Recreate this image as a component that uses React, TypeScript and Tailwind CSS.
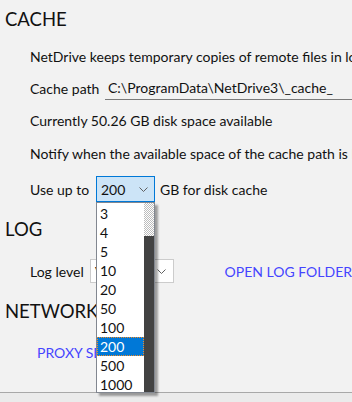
import { useState } from 'react'

const font = { fontFamily: 'Lato, "Noto Sans", sans-serif' }

function Chevron() {
  return (
    <svg width="9" height="5" viewBox="0 0 9 5" className="shrink-0">
      <polyline points="0.5,0.5 4.5,4.5 8.5,0.5" fill="none" stroke="#606060" strokeWidth="1" />
    </svg>
  )
}

const sizes = ['3', '4', '5', '10', '20', '50', '100', '200', '500', '1000']

export default function App() {
  const [size] = useState('200')

  return (
    <div className="relative w-[352px] h-[402px] overflow-hidden bg-[#f2f2f2] text-[#111] text-[14px]" style={font}>
      <div className="flex flex-col h-[392px]">
        <div className="h-[40px] flex items-center pl-[5px] text-[18.5px]">CACHE</div>
        <div className="h-[32px] flex items-center pl-[30px] whitespace-nowrap">
          NetDrive keeps temporary copies of remote files in local disk
        </div>
        <div className="h-[32px] flex items-center pl-[30px] whitespace-nowrap">
          <span className="w-[75px] shrink-0">Cache path</span>
          <div className="flex-1 h-[24px] flex items-center pl-[3px] border-b border-[#7a7a7a]">
            C:\ProgramData\NetDrive3\_cache_
          </div>
        </div>
        <div className="h-[32px] flex items-center pl-[30px] whitespace-nowrap">
          Currently 50.26 GB disk space available
        </div>
        <div className="h-[34px] flex items-center pl-[30px] whitespace-nowrap">
          Notify when the available space of the cache path is less than
        </div>
        <div className="h-[38px] flex items-center pl-[30px] whitespace-nowrap">
          <span className="w-[66px] shrink-0">Use up to</span>
          <div className="w-[59px] h-[26px] flex items-center justify-between pl-[4px] pr-[6px] border border-[#0078d7] bg-[#cce4f7]">
            <span>{size}</span>
            <Chevron />
          </div>
          <span className="ml-[5px]">GB for disk cache</span>
        </div>
        <div className="h-[44px] flex items-center pl-[5px] text-[18.5px]">LOG</div>
        <div className="h-[38px] flex items-center pl-[30px] whitespace-nowrap">
          <span className="w-[60px] shrink-0">Log level</span>
          <div className="w-[89px] h-[24px] flex items-center justify-between pl-[4px] pr-[7px] border border-[#cccccc] bg-white">
            <span>Verbose</span>
            <Chevron />
          </div>
          <span className="ml-[51px] text-[#4545ff]">OPEN LOG FOLDER</span>
        </div>
        <div className="h-[44px] flex items-center pl-[5px] text-[18.5px]">NETWORK</div>
        <div className="h-[36px] flex items-center pl-[37px] text-[#4545ff] whitespace-nowrap">PROXY SETTINGS</div>
      </div>
      <div className="h-[10px] border-t border-[#a8a8a8] bg-[#ebebeb]" />

      {/* open dropdown list */}
      <div className="absolute left-[96px] top-[202px] w-[59px] h-[191px] flex border border-[#828790] bg-white shadow-[3px_3px_2px_rgba(0,0,0,0.35)]">
        <div className="flex-1 flex flex-col pt-[1px]">
          {sizes.map((s) => (
            <div
              key={s}
              className={
                s === size
                  ? 'h-[19px] flex items-center pl-[3px] bg-[#0078d7] text-white outline-1 outline-dotted outline-[#f08a24] -outline-offset-1'
                  : 'h-[19px] flex items-center pl-[3px]'
              }
            >
              {s}
            </div>
          ))}
        </div>
        <div className="w-[10px] flex flex-col">
          <div className="h-[33px] bg-[repeating-conic-gradient(#bdbdbd_0_25%,#ffffff_0_50%)] bg-[length:2px_2px]" />
          <div className="flex-1 bg-[#424242]" />
        </div>
      </div>
    </div>
  )
}
